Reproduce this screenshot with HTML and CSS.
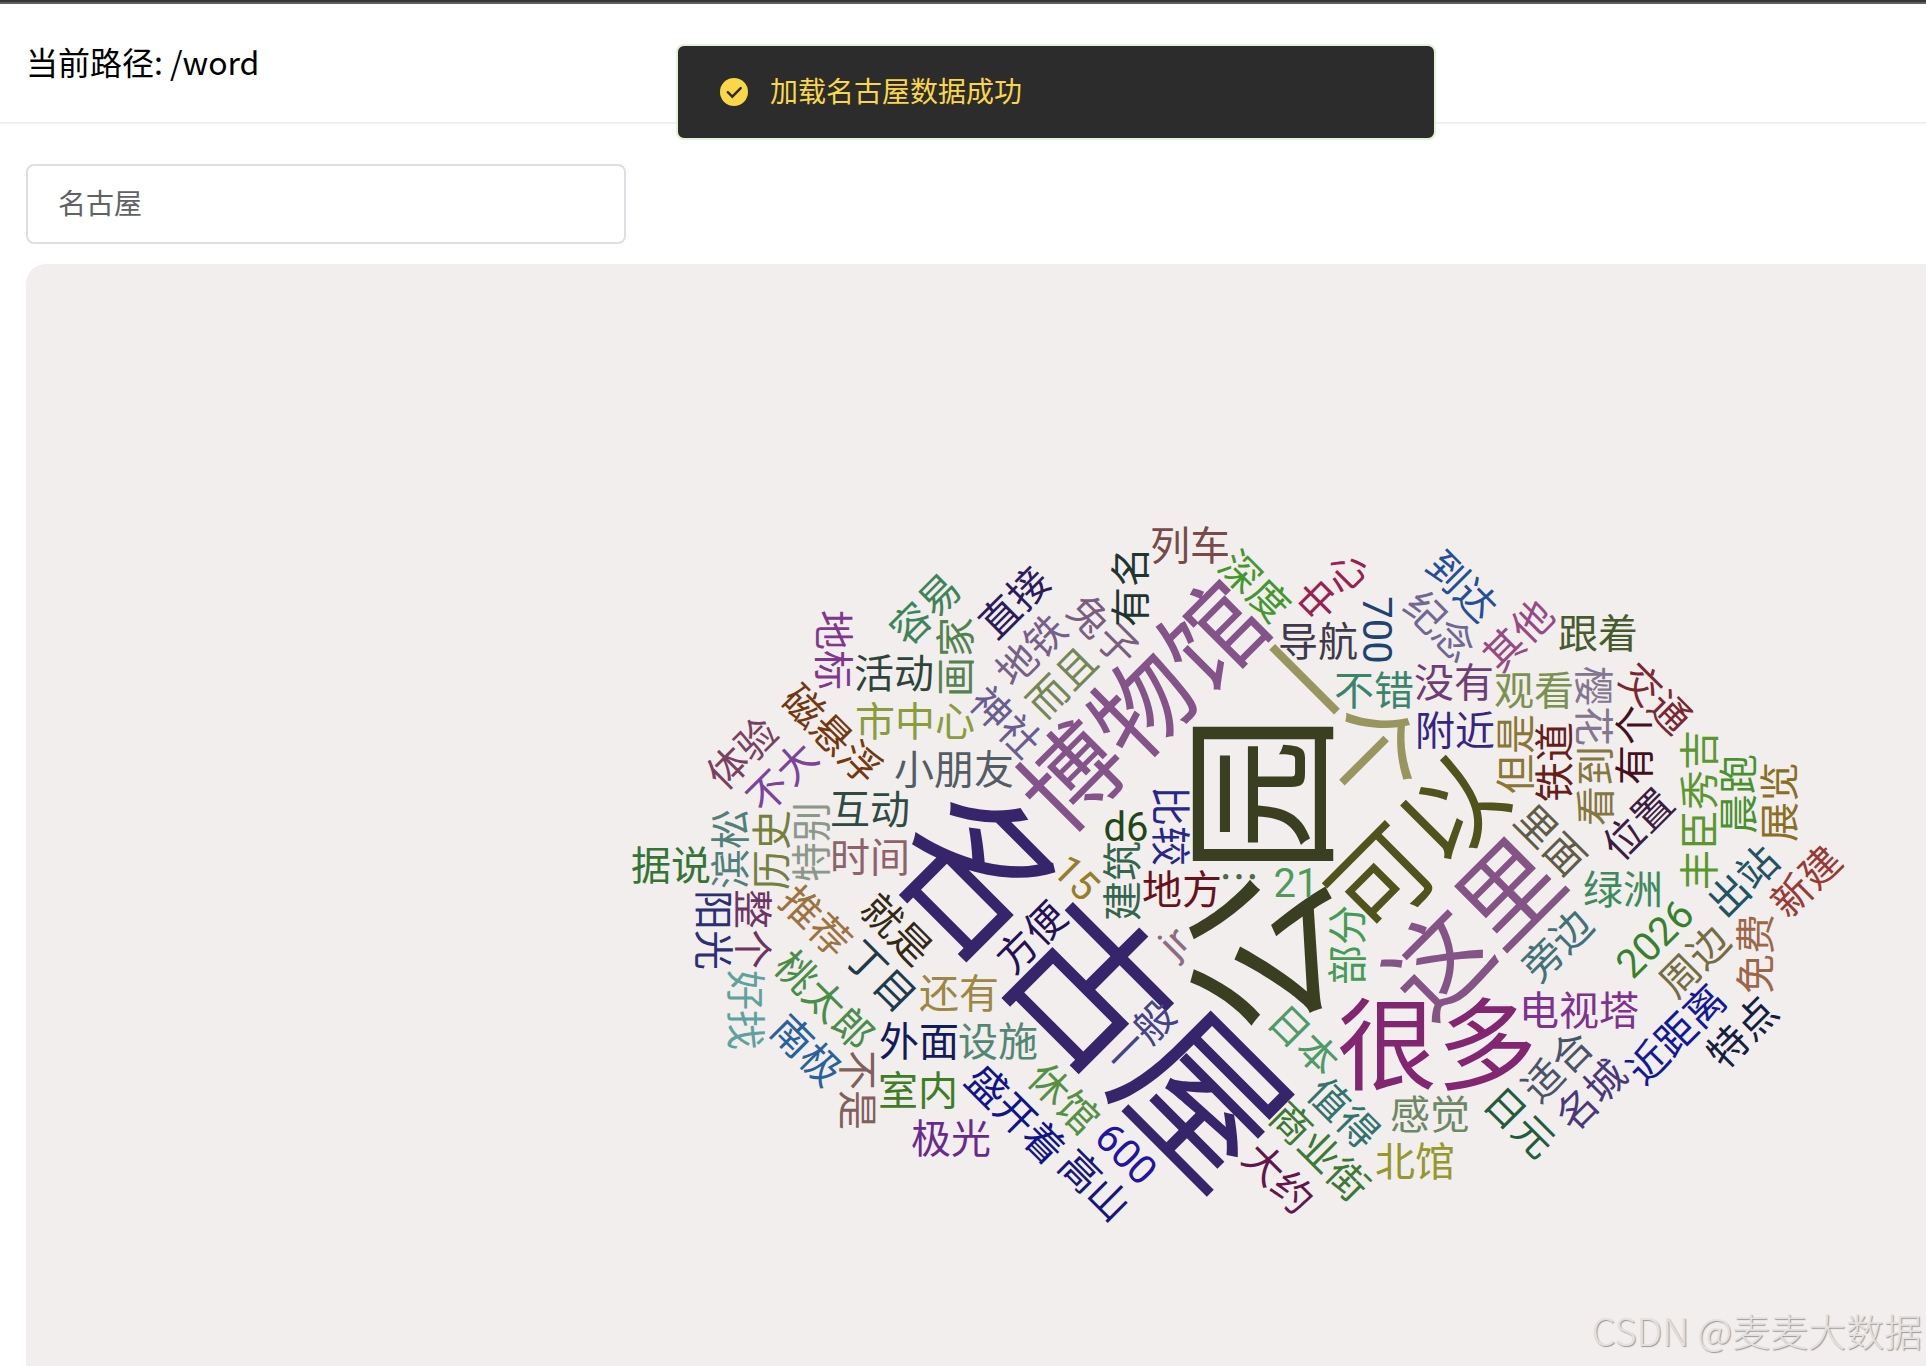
FILE: index.html
```
<!DOCTYPE html>
<html lang="zh-CN">
<head>
	<meta charset="UTF-8">
	<title>词云</title>
	<link rel="stylesheet" href="styles.css">
</head>
<body>
	<div class="page">
		<header class="header">
			<div class="path">当前路径: /word</div>
		</header>
		<main class="main">
			<input class="city_input" type="text" value="名古屋" aria-label="城市">
			<div class="cloud">
				<svg class="cloud_svg" viewBox="26 264 1900 1102" role="img" aria-label="名古屋词云"></svg>
			</div>
		</main>
	</div>
	<div class="message" role="alert">
		<svg class="message_icon" viewBox="0 0 28 28">
			<circle cx="14" cy="14" r="14" fill="#f9d749"/>
			<path d="M7.8 14.2l4.5 4.5 8.4-8.6" fill="none" stroke="#2c2c2c" stroke-width="2.4" stroke-linecap="round"/>
		</svg>
		<p class="message_text">加载名古屋数据成功</p>
	</div>
	<div class="watermark">CSDN @麦麦大数据</div>
	<script src="cloud.js"></script>
</body>
</html>
```

FILE: styles.css
```
*{
	margin: 0;
	padding: 0;
	box-sizing: border-box;
}
body{
	font-family: "Noto Sans CJK SC", sans-serif;
	background-color: #fff;
	color: #000;
	overflow: hidden;
}
.page{
	display: flex;
	flex-direction: column;
	height: 100vh;
	border-top: 2px solid #363636;
}
.header{
	display: flex;
	align-items: center;
	height: 122px;
	padding: 0 26px 4px;
	border-top: 2px solid #5f5f5f;
	border-bottom: 2px solid #efeff5;
}
.path{
	font-size: 32px;
	line-height: 48px;
}
.main{
	flex: 1;
	display: flex;
	flex-direction: column;
	align-items: flex-start;
	gap: 20px;
	min-height: 0;
	padding: 40px 0 0 26px;
}
.city_input{
	width: 600px;
	height: 80px;
	padding: 0 30px 4px;
	border: 2px solid #dcdfe6;
	border-radius: 8px;
	outline: none;
	font-family: inherit;
	font-size: 28px;
	color: #606266;
}
.cloud{
	flex: 1;
	width: 100%;
	min-height: 0;
	border-top-left-radius: 20px;
	background-color: #f1eeed;
}
.cloud_svg{
	display: block;
	width: 100%;
	height: 100%;
}
.word{
	font-family: Roboto, "Noto Sans CJK SC", sans-serif;
	text-anchor: middle;
}
.message{
	position: absolute;
	top: 44px;
	left: 676px;
	display: flex;
	align-items: center;
	gap: 22px;
	width: 760px;
	height: 96px;
	padding: 0 42px;
	border: 2px solid #e1f3d8;
	border-radius: 8px;
	background-color: #2c2c2c;
}
.message_icon{
	width: 28px;
	height: 28px;
}
.message_text{
	padding-bottom: 4px;
	font-size: 28px;
	line-height: 28px;
	color: #f9d749;
}
.watermark{
	position: absolute;
	right: 4px;
	bottom: 8px;
	font-size: 38px;
	font-weight: 300;
	line-height: 56px;
	color: #e2e0e0;
	text-shadow: 1px 1px 1px #999;
}
```

FILE: cloud.js
```
// 词, 中心x, 中心y, 旋转角度, 颜色, 字号(默认40)
var words = [
	['名古屋', 1092, 984, 45, '#36256b', 160],
	['公园', 1259, 874, -90, '#3a3f22', 160],
	['博物馆', 1142, 705, -45, '#845389', 100],
	['一个', 1339, 715, 45, '#99955e', 100],
	['可以', 1416, 844, -45, '#50531c', 100],
	['这里', 1473, 927, -45, '#835485', 100],
	['很多', 1437, 1044, 0, '#832671', 100],
	['容易', 925, 609, -45, '#3f8459'],
	['地标', 834, 650, 90, '#7f388d'],
	['画家', 955, 657, -90, '#54824f'],
	['活动', 894, 673, 0, '#2e443a'],
	['市中心', 915, 721, 0, '#8a9d3b'],
	['磁悬浮', 832, 734, 45, '#743810'],
	['体验', 742, 753, -45, '#79405f'],
	['不大', 782, 777, -45, '#7a449c'],
	['小朋友', 954, 769, 0, '#525d65'],
	['互动', 870, 809, 0, '#2f4a42'],
	['神社', 1006, 722, 45, '#685c90'],
	['地铁', 1031, 650, -45, '#765f88'],
	['直接', 1014, 602, -45, '#2b1a5e'],
	['滨松', 730, 849, -90, '#508079'],
	['历史', 771, 850, -90, '#74803b'],
	['特别', 811, 842, -90, '#8b9888'],
	['据说', 671, 865, 0, '#347435'],
	['时间', 870, 857, 0, '#8e626b'],
	['阳光', 714, 930, 90, '#2c2e78'],
	['整个', 753, 929, 90, '#6e3362'],
	['推荐', 816, 921, 45, '#9c7340'],
	['就是', 897, 929, 45, '#332816'],
	['丁目', 881, 976, 45, '#1f3a4a'],
	['桃太郎', 825, 1000, 45, '#4a8d4a'],
	['还有', 959, 993, 0, '#9c8743'],
	['好找', 746, 1010, 90, '#5fa29d'],
	['南极', 807, 1050, 45, '#28619e'],
	['外面', 919, 1041, 0, '#101a5c'],
	['设施', 998, 1041, 0, '#528775'],
	['不是', 858, 1090, 90, '#81605c'],
	['室内', 918, 1090, 0, '#3f7d25'],
	['极光', 951, 1138, 0, '#692990'],
	['盛开着', 1016, 1114, 45, '#10148c'],
	['兔子', 1104, 630, 45, '#7a5d7f'],
	['而且', 1062, 682, -45, '#758656'],
	['有名', 1130, 587, -90, '#1f3531'],
	['列车', 1190, 545, 0, '#764b49'],
	['深度', 1255, 586, 45, '#43972c'],
	['中心', 1332, 586, -45, '#99214f'],
	['导航', 1318, 641, 0, '#3e3a4b'],
	['700', 1378, 630, 90, '#1d4373'],
	['不错', 1374, 690, 0, '#3b846c'],
	['比较', 1171, 826, 90, '#26268d'],
	['d6', 1126, 826, 0, '#244515'],
	['建筑', 1122, 881, -90, '#33664d'],
	['15', 1077, 877, 45, '#957f2b'],
	['方便', 1031, 937, -45, '#231056'],
	['地方', 1182, 889, 0, '#67121b'],
	['⋯', 1239, 877, 0, '#4c6a47'],
	['21', 1296, 882, 0, '#4f9a5b'],
	['jr', 1173, 941, -45, '#8d6c82'],
	['部分', 1347, 945, -90, '#449b54'],
	['日本', 1304, 1040, 45, '#4f9a69'],
	['一般', 1140, 1036, -45, '#444389'],
	['休馆', 1064, 1098, 45, '#549143'],
	['600', 1127, 1153, 45, '#2014a0'],
	['高山', 1095, 1185, 45, '#16177c'],
	['值得', 1344, 1113, 45, '#33736e'],
	['商业街', 1320, 1151, 45, '#3c7934'],
	['大约', 1279, 1178, 45, '#62164d'],
	['感觉', 1430, 1114, 0, '#6d8865'],
	['北馆', 1415, 1161, 0, '#96972c'],
	['到达', 1462, 586, 45, '#234e99'],
	['纪念', 1440, 626, 45, '#706794'],
	['其他', 1518, 635, -45, '#954a84'],
	['跟着', 1598, 633, 0, '#475b2d'],
	['没有', 1454, 682, 0, '#6f3d74'],
	['观看', 1534, 690, 0, '#7b9150'],
	['樱花', 1594, 706, 90, '#85768f'],
	['交通', 1656, 698, 45, '#7a2732'],
	['附近', 1455, 730, 0, '#352584'],
	['但是', 1515, 754, -90, '#8b7633'],
	['铁道', 1554, 762, -90, '#661d1c'],
	['看到', 1595, 786, -90, '#84773f'],
	['有个', 1634, 745, -90, '#440f20'],
	['里面', 1551, 840, 45, '#5e5c47'],
	['位置', 1638, 824, -45, '#3b1c42'],
	['丰臣秀吉', 1699, 810, -90, '#5a982e'],
	['晨跑', 1738, 794, -90, '#46922c'],
	['展览', 1779, 802, -90, '#8a6e24'],
	['绿洲', 1623, 889, 0, '#3e8a5d'],
	['旁边', 1557, 945, -45, '#427277'],
	['2026', 1654, 938, -45, '#35822a'],
	['周边', 1694, 961, -45, '#756d42'],
	['出站', 1743, 881, -45, '#215363'],
	['新建', 1806, 881, -45, '#993a34'],
	['免费', 1755, 954, -90, '#9c6649'],
	['电视塔', 1579, 1010, 0, '#80308f'],
	['近距离', 1676, 1034, -45, '#11199b'],
	['特点', 1742, 1032, -45, '#15203f'],
	['适合', 1557, 1066, -45, '#4c5368'],
	['名城', 1591, 1095, -45, '#49387a'],
	['日元', 1520, 1122, 45, '#235b3d']
];

var svg = document.getElementsByClassName('cloud_svg')[0];

for (var i = 0; i < words.length; i++) {
	var w = words[i];
	var size = w[5] || 40;
	var text = document.createElementNS('http://www.w3.org/2000/svg', 'text');
	text.setAttribute('class', 'word');
	text.setAttribute('font-size', size);
	text.setAttribute('fill', w[4]);
	// 基线下移, 让文字以中心点旋转
	text.setAttribute('y', Math.round(size * 0.38));
	text.setAttribute('transform', 'translate(' + w[1] + ',' + w[2] + ') rotate(' + w[3] + ')');
	text.textContent = w[0];
	svg.appendChild(text);
}
```
